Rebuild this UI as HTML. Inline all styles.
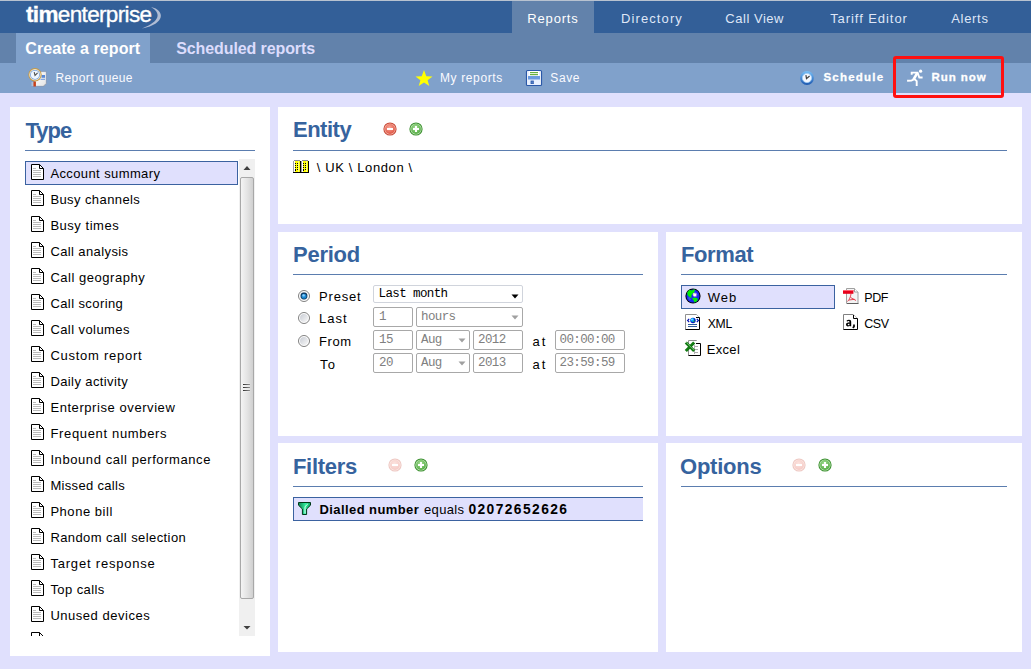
<!DOCTYPE html>
<html><head><meta charset="utf-8"><style>
html,body{margin:0;padding:0;}
body{width:1031px;height:669px;position:relative;overflow:hidden;background:#e0e0fd;font-family:'Liberation Sans', sans-serif;}
.t{position:absolute;white-space:pre;line-height:1;}
.r{position:absolute;}
</style></head><body>
<div class="r" style="left:0px;top:0px;width:1031px;height:1px;background:#b8c2d0"></div>
<div class="r" style="left:0px;top:1px;width:1031px;height:32px;background:#335f98"></div>
<div class="r" style="left:0px;top:33px;width:1031px;height:30px;background:#6282ab"></div>
<div class="r" style="left:0px;top:63px;width:1031px;height:30px;background:#80a1cb"></div>
<div class="r" style="left:512px;top:1px;width:82px;height:32px;background:#6282ab"></div>
<div class="r" style="left:16px;top:33px;width:134px;height:30px;background:#80a1cb"></div>
<div id="t1" class="t" style="left:527.3px;top:12.00px;font-size:13px;font-weight:400;color:#ffffff;letter-spacing:0.833px;font-family:'Liberation Sans', sans-serif;">Reports</div>
<div id="t2" class="t" style="left:621px;top:12.00px;font-size:13px;font-weight:400;color:#dfe6f7;letter-spacing:1.100px;font-family:'Liberation Sans', sans-serif;">Directory</div>
<div id="t3" class="t" style="left:725.3px;top:12.00px;font-size:13px;font-weight:400;color:#dfe6f7;letter-spacing:0.525px;font-family:'Liberation Sans', sans-serif;">Call View</div>
<div id="t4" class="t" style="left:830.2px;top:12.00px;font-size:13px;font-weight:400;color:#dfe6f7;letter-spacing:0.933px;font-family:'Liberation Sans', sans-serif;">Tariff Editor</div>
<div id="t5" class="t" style="left:951.2px;top:12.00px;font-size:13px;font-weight:400;color:#dfe6f7;letter-spacing:0.700px;font-family:'Liberation Sans', sans-serif;">Alerts</div>
<div id="t6" class="t" style="left:26px;top:4.15px;font-size:22.5px;font-weight:400;color:#ffffff;letter-spacing:-0.650px;font-family:'Liberation Sans', sans-serif;-webkit-text-stroke:0.35px #fff"><b>tim</b>enterprise</div>
<svg class="r" style="left:140px;top:5px;" width="26" height="26" viewBox="0 0 26 26"><path d="M11 2 C 25 5, 26 19, 2 23.5 C 21 16, 21 8, 11 2 Z" fill="#b0bcd4"/></svg>
<div id="t7" class="t" style="left:25.3px;top:41.46px;font-size:16px;font-weight:700;color:#ffffff;letter-spacing:0.071px;font-family:'Liberation Sans', sans-serif;">Create a report</div>
<div id="t8" class="t" style="left:176.2px;top:41.46px;font-size:16px;font-weight:700;color:#dcdcfc;letter-spacing:-0.100px;font-family:'Liberation Sans', sans-serif;">Scheduled reports</div>
<div id="t9" class="t" style="left:55.5px;top:71.84px;font-size:12px;font-weight:400;color:#fafaff;letter-spacing:0.391px;font-family:'Liberation Sans', sans-serif;">Report queue</div>
<div id="t10" class="t" style="left:440px;top:71.84px;font-size:12px;font-weight:400;color:#fafaff;letter-spacing:0.622px;font-family:'Liberation Sans', sans-serif;">My reports</div>
<div id="t11" class="t" style="left:550.3px;top:71.84px;font-size:12px;font-weight:400;color:#fafaff;letter-spacing:0.633px;font-family:'Liberation Sans', sans-serif;">Save</div>
<div id="t12" class="t" style="left:823.4px;top:72.37px;font-size:11.5px;font-weight:700;color:#fff;letter-spacing:1.225px;font-family:'Liberation Sans', sans-serif;-webkit-text-stroke:0.3px #fff">Schedule</div>
<div id="t13" class="t" style="left:931.5px;top:72.37px;font-size:11.5px;font-weight:700;color:#fff;letter-spacing:0.930px;font-family:'Liberation Sans', sans-serif;-webkit-text-stroke:0.3px #fff">Run now</div>
<div class="r" style="left:10px;top:107px;width:260px;height:549px;background:#fff"></div>
<div class="r" style="left:278px;top:107px;width:744px;height:117px;background:#fff"></div>
<div class="r" style="left:278px;top:232px;width:380px;height:204px;background:#fff"></div>
<div class="r" style="left:666px;top:232px;width:356px;height:204px;background:#fff"></div>
<div class="r" style="left:278px;top:443px;width:380px;height:209px;background:#fff"></div>
<div class="r" style="left:666px;top:443px;width:356px;height:209px;background:#fff"></div>
<div id="t14" class="t" style="left:25.4px;top:120.38px;font-size:22px;font-weight:700;color:#36639e;letter-spacing:-0.971px;font-family:'Liberation Sans', sans-serif;">Type</div>
<div class="r" style="left:25px;top:150px;width:230px;height:1px;background:#5b7daf"></div>
<div id="t15" class="t" style="left:293px;top:119.18px;font-size:22px;font-weight:700;color:#36639e;letter-spacing:-0.500px;font-family:'Liberation Sans', sans-serif;">Entity</div>
<div class="r" style="left:293px;top:150px;width:714px;height:1px;background:#5b7daf"></div>
<div id="t16" class="t" style="left:293px;top:243.88px;font-size:22px;font-weight:700;color:#36639e;letter-spacing:-0.250px;font-family:'Liberation Sans', sans-serif;">Period</div>
<div class="r" style="left:293px;top:274px;width:350px;height:1px;background:#5b7daf"></div>
<div id="t17" class="t" style="left:681px;top:243.88px;font-size:22px;font-weight:700;color:#36639e;letter-spacing:-0.380px;font-family:'Liberation Sans', sans-serif;">Format</div>
<div class="r" style="left:681px;top:274px;width:326px;height:1px;background:#5b7daf"></div>
<div id="t18" class="t" style="left:293px;top:456.18px;font-size:22px;font-weight:700;color:#36639e;letter-spacing:-0.316px;font-family:'Liberation Sans', sans-serif;">Filters</div>
<div class="r" style="left:293px;top:486px;width:350px;height:1px;background:#5b7daf"></div>
<div id="t19" class="t" style="left:680px;top:456.18px;font-size:22px;font-weight:700;color:#36639e;letter-spacing:-0.234px;font-family:'Liberation Sans', sans-serif;">Options</div>
<div class="r" style="left:681px;top:486px;width:326px;height:1px;background:#5b7daf"></div>
<div class="r" style="left:25px;top:161px;width:213px;height:24px;background:#e0e0fd;border:1px solid #3b62a0;box-sizing:border-box"></div>
<div class="r" style="left:25px;top:159px;width:214px;height:477px;overflow:hidden">
<svg class="r" style="left:6px;top:5px;" width="13" height="16" viewBox="0 0 13 16"><path d="M0.5 0.5 H8.5 L12.5 4.5 V15.5 H0.5 Z" fill="#fff" stroke="#000"/><path d="M8.5 0.5 V4.5 H12.5" fill="none" stroke="#000"/><path d="M2 4.5h3M2 6.5h8M2 8.5h8M2 10.5h8M2 12.5h8" stroke="#bbb"/></svg>
<div id="t20" class="t" style="left:25.4px;top:8.00px;font-size:13px;font-weight:400;color:#000;letter-spacing:0.395px;font-family:'Liberation Sans', sans-serif;">Account summary</div>
<svg class="r" style="left:6px;top:31px;" width="13" height="16" viewBox="0 0 13 16"><path d="M0.5 0.5 H8.5 L12.5 4.5 V15.5 H0.5 Z" fill="#fff" stroke="#000"/><path d="M8.5 0.5 V4.5 H12.5" fill="none" stroke="#000"/><path d="M2 4.5h3M2 6.5h8M2 8.5h8M2 10.5h8M2 12.5h8" stroke="#bbb"/></svg>
<div id="t21" class="t" style="left:25.4px;top:34.00px;font-size:13px;font-weight:400;color:#000;letter-spacing:0.410px;font-family:'Liberation Sans', sans-serif;">Busy channels</div>
<svg class="r" style="left:6px;top:57px;" width="13" height="16" viewBox="0 0 13 16"><path d="M0.5 0.5 H8.5 L12.5 4.5 V15.5 H0.5 Z" fill="#fff" stroke="#000"/><path d="M8.5 0.5 V4.5 H12.5" fill="none" stroke="#000"/><path d="M2 4.5h3M2 6.5h8M2 8.5h8M2 10.5h8M2 12.5h8" stroke="#bbb"/></svg>
<div id="t22" class="t" style="left:25.4px;top:60.00px;font-size:13px;font-weight:400;color:#000;letter-spacing:0.522px;font-family:'Liberation Sans', sans-serif;">Busy times</div>
<svg class="r" style="left:6px;top:83px;" width="13" height="16" viewBox="0 0 13 16"><path d="M0.5 0.5 H8.5 L12.5 4.5 V15.5 H0.5 Z" fill="#fff" stroke="#000"/><path d="M8.5 0.5 V4.5 H12.5" fill="none" stroke="#000"/><path d="M2 4.5h3M2 6.5h8M2 8.5h8M2 10.5h8M2 12.5h8" stroke="#bbb"/></svg>
<div id="t23" class="t" style="left:25.4px;top:86.00px;font-size:13px;font-weight:400;color:#000;letter-spacing:0.394px;font-family:'Liberation Sans', sans-serif;">Call analysis</div>
<svg class="r" style="left:6px;top:109px;" width="13" height="16" viewBox="0 0 13 16"><path d="M0.5 0.5 H8.5 L12.5 4.5 V15.5 H0.5 Z" fill="#fff" stroke="#000"/><path d="M8.5 0.5 V4.5 H12.5" fill="none" stroke="#000"/><path d="M2 4.5h3M2 6.5h8M2 8.5h8M2 10.5h8M2 12.5h8" stroke="#bbb"/></svg>
<div id="t24" class="t" style="left:25.4px;top:112.00px;font-size:13px;font-weight:400;color:#000;letter-spacing:0.524px;font-family:'Liberation Sans', sans-serif;">Call geography</div>
<svg class="r" style="left:6px;top:135px;" width="13" height="16" viewBox="0 0 13 16"><path d="M0.5 0.5 H8.5 L12.5 4.5 V15.5 H0.5 Z" fill="#fff" stroke="#000"/><path d="M8.5 0.5 V4.5 H12.5" fill="none" stroke="#000"/><path d="M2 4.5h3M2 6.5h8M2 8.5h8M2 10.5h8M2 12.5h8" stroke="#bbb"/></svg>
<div id="t25" class="t" style="left:25.4px;top:138.00px;font-size:13px;font-weight:400;color:#000;letter-spacing:0.411px;font-family:'Liberation Sans', sans-serif;">Call scoring</div>
<svg class="r" style="left:6px;top:161px;" width="13" height="16" viewBox="0 0 13 16"><path d="M0.5 0.5 H8.5 L12.5 4.5 V15.5 H0.5 Z" fill="#fff" stroke="#000"/><path d="M8.5 0.5 V4.5 H12.5" fill="none" stroke="#000"/><path d="M2 4.5h3M2 6.5h8M2 8.5h8M2 10.5h8M2 12.5h8" stroke="#bbb"/></svg>
<div id="t26" class="t" style="left:25.4px;top:164.00px;font-size:13px;font-weight:400;color:#000;letter-spacing:0.428px;font-family:'Liberation Sans', sans-serif;">Call volumes</div>
<svg class="r" style="left:6px;top:187px;" width="13" height="16" viewBox="0 0 13 16"><path d="M0.5 0.5 H8.5 L12.5 4.5 V15.5 H0.5 Z" fill="#fff" stroke="#000"/><path d="M8.5 0.5 V4.5 H12.5" fill="none" stroke="#000"/><path d="M2 4.5h3M2 6.5h8M2 8.5h8M2 10.5h8M2 12.5h8" stroke="#bbb"/></svg>
<div id="t27" class="t" style="left:25.4px;top:190.00px;font-size:13px;font-weight:400;color:#000;letter-spacing:0.747px;font-family:'Liberation Sans', sans-serif;">Custom report</div>
<svg class="r" style="left:6px;top:213px;" width="13" height="16" viewBox="0 0 13 16"><path d="M0.5 0.5 H8.5 L12.5 4.5 V15.5 H0.5 Z" fill="#fff" stroke="#000"/><path d="M8.5 0.5 V4.5 H12.5" fill="none" stroke="#000"/><path d="M2 4.5h3M2 6.5h8M2 8.5h8M2 10.5h8M2 12.5h8" stroke="#bbb"/></svg>
<div id="t28" class="t" style="left:25.4px;top:216.00px;font-size:13px;font-weight:400;color:#000;letter-spacing:0.399px;font-family:'Liberation Sans', sans-serif;">Daily activity</div>
<svg class="r" style="left:6px;top:239px;" width="13" height="16" viewBox="0 0 13 16"><path d="M0.5 0.5 H8.5 L12.5 4.5 V15.5 H0.5 Z" fill="#fff" stroke="#000"/><path d="M8.5 0.5 V4.5 H12.5" fill="none" stroke="#000"/><path d="M2 4.5h3M2 6.5h8M2 8.5h8M2 10.5h8M2 12.5h8" stroke="#bbb"/></svg>
<div id="t29" class="t" style="left:25.4px;top:242.00px;font-size:13px;font-weight:400;color:#000;letter-spacing:0.570px;font-family:'Liberation Sans', sans-serif;">Enterprise overview</div>
<svg class="r" style="left:6px;top:265px;" width="13" height="16" viewBox="0 0 13 16"><path d="M0.5 0.5 H8.5 L12.5 4.5 V15.5 H0.5 Z" fill="#fff" stroke="#000"/><path d="M8.5 0.5 V4.5 H12.5" fill="none" stroke="#000"/><path d="M2 4.5h3M2 6.5h8M2 8.5h8M2 10.5h8M2 12.5h8" stroke="#bbb"/></svg>
<div id="t30" class="t" style="left:25.4px;top:268.00px;font-size:13px;font-weight:400;color:#000;letter-spacing:0.667px;font-family:'Liberation Sans', sans-serif;">Frequent numbers</div>
<svg class="r" style="left:6px;top:291px;" width="13" height="16" viewBox="0 0 13 16"><path d="M0.5 0.5 H8.5 L12.5 4.5 V15.5 H0.5 Z" fill="#fff" stroke="#000"/><path d="M8.5 0.5 V4.5 H12.5" fill="none" stroke="#000"/><path d="M2 4.5h3M2 6.5h8M2 8.5h8M2 10.5h8M2 12.5h8" stroke="#bbb"/></svg>
<div id="t31" class="t" style="left:25.4px;top:294.00px;font-size:13px;font-weight:400;color:#000;letter-spacing:0.580px;font-family:'Liberation Sans', sans-serif;">Inbound call performance</div>
<svg class="r" style="left:6px;top:317px;" width="13" height="16" viewBox="0 0 13 16"><path d="M0.5 0.5 H8.5 L12.5 4.5 V15.5 H0.5 Z" fill="#fff" stroke="#000"/><path d="M8.5 0.5 V4.5 H12.5" fill="none" stroke="#000"/><path d="M2 4.5h3M2 6.5h8M2 8.5h8M2 10.5h8M2 12.5h8" stroke="#bbb"/></svg>
<div id="t32" class="t" style="left:25.4px;top:320.00px;font-size:13px;font-weight:400;color:#000;letter-spacing:0.320px;font-family:'Liberation Sans', sans-serif;">Missed calls</div>
<svg class="r" style="left:6px;top:343px;" width="13" height="16" viewBox="0 0 13 16"><path d="M0.5 0.5 H8.5 L12.5 4.5 V15.5 H0.5 Z" fill="#fff" stroke="#000"/><path d="M8.5 0.5 V4.5 H12.5" fill="none" stroke="#000"/><path d="M2 4.5h3M2 6.5h8M2 8.5h8M2 10.5h8M2 12.5h8" stroke="#bbb"/></svg>
<div id="t33" class="t" style="left:25.4px;top:346.00px;font-size:13px;font-weight:400;color:#000;letter-spacing:0.535px;font-family:'Liberation Sans', sans-serif;">Phone bill</div>
<svg class="r" style="left:6px;top:369px;" width="13" height="16" viewBox="0 0 13 16"><path d="M0.5 0.5 H8.5 L12.5 4.5 V15.5 H0.5 Z" fill="#fff" stroke="#000"/><path d="M8.5 0.5 V4.5 H12.5" fill="none" stroke="#000"/><path d="M2 4.5h3M2 6.5h8M2 8.5h8M2 10.5h8M2 12.5h8" stroke="#bbb"/></svg>
<div id="t34" class="t" style="left:25.4px;top:372.00px;font-size:13px;font-weight:400;color:#000;letter-spacing:0.410px;font-family:'Liberation Sans', sans-serif;">Random call selection</div>
<svg class="r" style="left:6px;top:395px;" width="13" height="16" viewBox="0 0 13 16"><path d="M0.5 0.5 H8.5 L12.5 4.5 V15.5 H0.5 Z" fill="#fff" stroke="#000"/><path d="M8.5 0.5 V4.5 H12.5" fill="none" stroke="#000"/><path d="M2 4.5h3M2 6.5h8M2 8.5h8M2 10.5h8M2 12.5h8" stroke="#bbb"/></svg>
<div id="t35" class="t" style="left:25.4px;top:398.00px;font-size:13px;font-weight:400;color:#000;letter-spacing:0.803px;font-family:'Liberation Sans', sans-serif;">Target response</div>
<svg class="r" style="left:6px;top:421px;" width="13" height="16" viewBox="0 0 13 16"><path d="M0.5 0.5 H8.5 L12.5 4.5 V15.5 H0.5 Z" fill="#fff" stroke="#000"/><path d="M8.5 0.5 V4.5 H12.5" fill="none" stroke="#000"/><path d="M2 4.5h3M2 6.5h8M2 8.5h8M2 10.5h8M2 12.5h8" stroke="#bbb"/></svg>
<div id="t36" class="t" style="left:25.4px;top:424.00px;font-size:13px;font-weight:400;color:#000;letter-spacing:0.420px;font-family:'Liberation Sans', sans-serif;">Top calls</div>
<svg class="r" style="left:6px;top:447px;" width="13" height="16" viewBox="0 0 13 16"><path d="M0.5 0.5 H8.5 L12.5 4.5 V15.5 H0.5 Z" fill="#fff" stroke="#000"/><path d="M8.5 0.5 V4.5 H12.5" fill="none" stroke="#000"/><path d="M2 4.5h3M2 6.5h8M2 8.5h8M2 10.5h8M2 12.5h8" stroke="#bbb"/></svg>
<div id="t37" class="t" style="left:25.4px;top:450.00px;font-size:13px;font-weight:400;color:#000;letter-spacing:0.524px;font-family:'Liberation Sans', sans-serif;">Unused devices</div>
<svg class="r" style="left:6px;top:473px;" width="13" height="16" viewBox="0 0 13 16"><path d="M0.5 0.5 H8.5 L12.5 4.5 V15.5 H0.5 Z" fill="#fff" stroke="#000"/><path d="M8.5 0.5 V4.5 H12.5" fill="none" stroke="#000"/><path d="M2 4.5h3M2 6.5h8M2 8.5h8M2 10.5h8M2 12.5h8" stroke="#bbb"/></svg>
</div>
<div class="r" style="left:239px;top:159px;width:16px;height:477px;background:#f0f0f0"></div>
<div class="r" style="left:240px;top:177px;width:14px;height:422px;background:linear-gradient(90deg,#f4f4f4,#e4e4e4 50%,#d0d0d0);border:1px solid #a8a8a8;box-sizing:border-box;border-radius:2px"></div>
<svg class="r" style="left:243px;top:383px;" width="8" height="9" viewBox="0 0 8 9"><path d="M0 1.5h7M0 4.5h7M0 7.5h7" stroke="#fff" stroke-width="2" opacity="0.6"/><defs><linearGradient id="gr" x1="0" x2="1"><stop offset="0" stop-color="#303030"/><stop offset="1" stop-color="#909090"/></linearGradient></defs><path d="M0 1.5h7M0 4.5h7M0 7.5h7" stroke="url(#gr)" stroke-width="1"/></svg>
<svg class="r" style="left:239px;top:158px;" width="16" height="18" viewBox="0 0 16 18"><path d="M4.5 12 L8 8 L11.5 12 Z" fill="#404040"/></svg>
<svg class="r" style="left:239px;top:618px;" width="16" height="18" viewBox="0 0 16 18"><path d="M4.5 8 L8 11.5 L11.5 8 Z" fill="#404040"/></svg>
<svg class="r" style="left:26px;top:65px;" width="24" height="24" viewBox="0 0 24 24"><defs><linearGradient id="dg" x1="0" y1="0" x2="1" y2="1"><stop offset="0" stop-color="#fff"/><stop offset="1" stop-color="#e4e4e4"/></linearGradient></defs>
<path d="M9 6.6 H20.3 V18.5 L17.8 21.3 H9 Z" fill="url(#dg)" stroke="#6a7a98" stroke-width="0.5"/>
<path d="M20 18.5 L17.5 21" stroke="#b0b0b0" stroke-width="0.8"/>
<rect x="15.5" y="10" width="3.5" height="2.8" fill="#5a8ad8"/><rect x="14.5" y="13.8" width="4.5" height="0.9" fill="#5a8ad8"/>
<rect x="7.3" y="16.5" width="2.6" height="5" fill="#c8401a"/>
<path d="M5.5 18h2M5.5 20h2" stroke="#f0f0f0" stroke-width="0.8"/>
<circle cx="9" cy="9.8" r="6.7" fill="#c49a48"/><circle cx="9" cy="9.8" r="5.7" fill="#f4ead0"/><circle cx="9" cy="9.8" r="4.9" fill="#78a4e4"/><circle cx="9" cy="9.8" r="4.1" fill="#f0f7ff"/>
<path d="M8.2 7.2 L9 10.5 L11.6 7.8" fill="none" stroke="#505050" stroke-width="1.1"/></svg>
<svg class="r" style="left:412px;top:66px;" width="24" height="24" viewBox="0 0 24 24"><polygon points="12,4 14.3,10.2 20.5,10.4 15.6,14.3 17.3,20 12,16.6 6.7,20 8.4,14.3 3.5,10.4 9.7,10.2" fill="#ffff00"/></svg>
<svg class="r" style="left:522px;top:66px;" width="24" height="24" viewBox="0 0 24 24"><rect x="4.5" y="4.5" width="15" height="15" rx="1" fill="#fff" stroke="#2a58a8" stroke-width="1.2"/>
<rect x="6" y="5" width="12" height="14" fill="#e8f0ff"/>
<rect x="7" y="5" width="10" height="4.8" fill="#fff"/><rect x="8" y="6" width="8" height="1.2" fill="#68b040"/><rect x="8" y="8" width="8" height="1.2" fill="#68b040"/>
<rect x="6" y="10" width="12" height="3.5" fill="#6a9ae0"/>
<rect x="8.6" y="14.6" width="3.2" height="3.4" fill="#2a58a8"/><path d="M10.2 14.6v3.4M8.6 16.3h3.2" stroke="#7aa0e0" stroke-width="0.4"/></svg>
<svg class="r" style="left:796px;top:66px;" width="24" height="24" viewBox="0 0 24 24"><defs><linearGradient id="cg" x1="0" y1="0" x2="0" y2="1"><stop offset="0" stop-color="#78c0f8"/><stop offset="1" stop-color="#1c58b0"/></linearGradient></defs>
<circle cx="11" cy="12" r="6.9" fill="url(#cg)"/><circle cx="11" cy="12" r="4.6" fill="#f4f8ff"/><circle cx="11" cy="12" r="4.6" fill="none" stroke="#a8d0f8" stroke-width="0.8"/>
<path d="M9.9 9.2 L10.5 12.6 L13.6 10" fill="none" stroke="#404040" stroke-width="1.2"/></svg>
<svg class="r" style="left:903px;top:66px;" width="24" height="24" viewBox="0 0 24 24"><circle cx="17.6" cy="5.2" r="1.6" fill="#fff"/>
<path d="M8.7 8.7 V6.6 H14.6 L16.3 11.5 H19.6" fill="none" stroke="#fff" stroke-width="1.9" stroke-linejoin="miter"/>
<path d="M14.3 7 L10.3 13.8" fill="none" stroke="#fff" stroke-width="2.6"/><path d="M10.6 13.6 L8.3 14.6 L4.1 14.8" fill="none" stroke="#fff" stroke-width="1.9"/>
<path d="M11.3 12.8 L13.7 15.2 V20" fill="none" stroke="#fff" stroke-width="1.9"/></svg>
<div class="r" style="left:893px;top:56px;width:111px;height:42px;border:3px solid #ff1010;box-sizing:border-box;border-radius:3px"></div>
<svg class="r" style="left:383px;top:122px;" width="14" height="14" viewBox="0 0 14 14"><g><defs><radialGradient id="rg383122" cx="0.45" cy="0.35" r="0.7"><stop offset="0" stop-color="#f8a898"/><stop offset="1" stop-color="#e05040"/></radialGradient></defs>
<circle cx="7" cy="7" r="6.6" fill="#c84838"/><circle cx="7" cy="7" r="5.6" fill="#f4c0b0"/><circle cx="7" cy="7" r="4.9" fill="url(#rg383122)"/>
<rect x="4" y="6" width="6" height="2" fill="#fff"/></g></svg>
<svg class="r" style="left:409px;top:122px;" width="14" height="14" viewBox="0 0 14 14"><defs><radialGradient id="gg409122" cx="0.45" cy="0.35" r="0.7"><stop offset="0" stop-color="#a8e098"/><stop offset="1" stop-color="#50a840"/></radialGradient></defs>
<circle cx="7" cy="7" r="6.6" fill="#3c9030"/><circle cx="7" cy="7" r="5.6" fill="#c8ecc0"/><circle cx="7" cy="7" r="4.9" fill="url(#gg409122)"/>
<rect x="4" y="6" width="6" height="2" fill="#fff"/><rect x="6" y="4" width="2" height="6" fill="#fff"/></svg>
<svg class="r" style="left:388px;top:458px;" width="14" height="14" viewBox="0 0 14 14"><g opacity="0.3"><defs><radialGradient id="rg388458" cx="0.45" cy="0.35" r="0.7"><stop offset="0" stop-color="#f8a898"/><stop offset="1" stop-color="#e05040"/></radialGradient></defs>
<circle cx="7" cy="7" r="6.6" fill="#c84838"/><circle cx="7" cy="7" r="5.6" fill="#f4c0b0"/><circle cx="7" cy="7" r="4.9" fill="url(#rg388458)"/>
<rect x="4" y="6" width="6" height="2" fill="#fff"/></g></svg>
<svg class="r" style="left:414px;top:458px;" width="14" height="14" viewBox="0 0 14 14"><defs><radialGradient id="gg414458" cx="0.45" cy="0.35" r="0.7"><stop offset="0" stop-color="#a8e098"/><stop offset="1" stop-color="#50a840"/></radialGradient></defs>
<circle cx="7" cy="7" r="6.6" fill="#3c9030"/><circle cx="7" cy="7" r="5.6" fill="#c8ecc0"/><circle cx="7" cy="7" r="4.9" fill="url(#gg414458)"/>
<rect x="4" y="6" width="6" height="2" fill="#fff"/><rect x="6" y="4" width="2" height="6" fill="#fff"/></svg>
<svg class="r" style="left:792px;top:458px;" width="14" height="14" viewBox="0 0 14 14"><g opacity="0.3"><defs><radialGradient id="rg792458" cx="0.45" cy="0.35" r="0.7"><stop offset="0" stop-color="#f8a898"/><stop offset="1" stop-color="#e05040"/></radialGradient></defs>
<circle cx="7" cy="7" r="6.6" fill="#c84838"/><circle cx="7" cy="7" r="5.6" fill="#f4c0b0"/><circle cx="7" cy="7" r="4.9" fill="url(#rg792458)"/>
<rect x="4" y="6" width="6" height="2" fill="#fff"/></g></svg>
<svg class="r" style="left:818px;top:458px;" width="14" height="14" viewBox="0 0 14 14"><defs><radialGradient id="gg818458" cx="0.45" cy="0.35" r="0.7"><stop offset="0" stop-color="#a8e098"/><stop offset="1" stop-color="#50a840"/></radialGradient></defs>
<circle cx="7" cy="7" r="6.6" fill="#3c9030"/><circle cx="7" cy="7" r="5.6" fill="#c8ecc0"/><circle cx="7" cy="7" r="4.9" fill="url(#gg818458)"/>
<rect x="4" y="6" width="6" height="2" fill="#fff"/><rect x="6" y="4" width="2" height="6" fill="#fff"/></svg>
<svg class="r" style="left:293px;top:160px;shape-rendering:crispEdges" width="16" height="13" viewBox="0 0 16 13"><rect x="1" y="0" width="6" height="1" fill="#909090"/><rect x="0" y="1" width="1" height="11" fill="#a0a0a0"/><rect x="1" y="1" width="6" height="11" fill="#ffff00"/><rect x="1" y="1" width="1" height="11" fill="#ffffff"/><rect x="5" y="1" width="1" height="11" fill="#ffff80"/><rect x="2" y="3" width="1" height="1" fill="#000"/><rect x="4" y="3" width="1" height="1" fill="#000"/><rect x="2" y="5" width="1" height="1" fill="#000"/><rect x="4" y="5" width="1" height="1" fill="#000"/><rect x="2" y="7" width="1" height="1" fill="#000"/><rect x="4" y="7" width="1" height="1" fill="#000"/><rect x="2" y="9" width="1" height="1" fill="#000"/><rect x="4" y="9" width="1" height="1" fill="#000"/><rect x="2" y="10" width="1" height="1" fill="#000"/><rect x="7" y="1" width="1" height="12" fill="#000"/><rect x="0" y="12" width="8" height="1" fill="#000"/><rect x="9" y="0" width="6" height="1" fill="#909090"/><rect x="8" y="1" width="1" height="11" fill="#a0a0a0"/><rect x="9" y="1" width="6" height="11" fill="#ffff00"/><rect x="9" y="1" width="1" height="11" fill="#ffffff"/><rect x="13" y="1" width="1" height="11" fill="#ffff80"/><rect x="10" y="3" width="1" height="1" fill="#000"/><rect x="12" y="3" width="1" height="1" fill="#000"/><rect x="10" y="5" width="1" height="1" fill="#000"/><rect x="12" y="5" width="1" height="1" fill="#000"/><rect x="10" y="7" width="1" height="1" fill="#000"/><rect x="12" y="7" width="1" height="1" fill="#000"/><rect x="10" y="9" width="1" height="1" fill="#000"/><rect x="12" y="9" width="1" height="1" fill="#000"/><rect x="10" y="10" width="1" height="1" fill="#000"/><rect x="15" y="1" width="1" height="12" fill="#000"/><rect x="8" y="12" width="8" height="1" fill="#000"/></svg>
<div id="t38" class="t" style="left:316.8px;top:161.00px;font-size:13px;font-weight:400;color:#000;letter-spacing:0.617px;font-family:'Liberation Sans', sans-serif;">\ UK \ London \</div>
<svg class="r" style="left:298px;top:290px;" width="12" height="12" viewBox="0 0 12 12"><defs><linearGradient id="rd296" x1="0" y1="0" x2="1" y2="1"><stop offset="0" stop-color="#c8ccd4"/><stop offset="1" stop-color="#f8f8f8"/></linearGradient></defs><circle cx="6" cy="6" r="5.5" fill="#fff" stroke="#808080" stroke-width="1"/><circle cx="6" cy="6" r="4" fill="url(#rd296)"/><circle cx="6" cy="6" r="3.4" fill="#0c365e"/><circle cx="6" cy="6.2" r="2.5" fill="#1c88d0"/><circle cx="5.6" cy="5.4" r="1.2" fill="#8cd0ff"/></svg>
<svg class="r" style="left:298px;top:312px;" width="12" height="12" viewBox="0 0 12 12"><defs><linearGradient id="rd318" x1="0" y1="0" x2="1" y2="1"><stop offset="0" stop-color="#c8ccd4"/><stop offset="1" stop-color="#f8f8f8"/></linearGradient></defs><circle cx="6" cy="6" r="5.5" fill="#fff" stroke="#808080" stroke-width="1"/><circle cx="6" cy="6" r="4" fill="url(#rd318)"/></svg>
<svg class="r" style="left:298px;top:335px;" width="12" height="12" viewBox="0 0 12 12"><defs><linearGradient id="rd341" x1="0" y1="0" x2="1" y2="1"><stop offset="0" stop-color="#c8ccd4"/><stop offset="1" stop-color="#f8f8f8"/></linearGradient></defs><circle cx="6" cy="6" r="5.5" fill="#fff" stroke="#808080" stroke-width="1"/><circle cx="6" cy="6" r="4" fill="url(#rd341)"/></svg>
<div id="t39" class="t" style="left:319.1px;top:290.00px;font-size:13px;font-weight:400;color:#000;letter-spacing:0.770px;font-family:'Liberation Sans', sans-serif;">Preset</div>
<div id="t40" class="t" style="left:319.1px;top:312.00px;font-size:13px;font-weight:400;color:#000;letter-spacing:0.993px;font-family:'Liberation Sans', sans-serif;">Last</div>
<div id="t41" class="t" style="left:319.1px;top:335.00px;font-size:13px;font-weight:400;color:#000;letter-spacing:0.590px;font-family:'Liberation Sans', sans-serif;">From</div>
<div id="t42" class="t" style="left:320.1px;top:358.00px;font-size:13px;font-weight:400;color:#000;letter-spacing:1.050px;font-family:'Liberation Sans', sans-serif;">To</div>
<div class="r" style="left:373px;top:285px;width:150px;height:18px;background:#fff;border:1px solid #d0d4dc;box-sizing:border-box;border-radius:2px"></div>
<div id="t43" class="t" style="left:378.5px;top:288.42px;font-size:12.5px;font-weight:400;color:#000;letter-spacing:-0.600px;font-family:'Liberation Mono', monospace;">Last month</div>
<svg class="r" style="left:511px;top:294px;" width="8" height="5" viewBox="0 0 8 5"><path d="M0.5 0.5 H7.5 L4 4.5 Z" fill="#000"/></svg>
<div class="r" style="left:373px;top:307px;width:40px;height:20px;background:#fff;border:1px solid #a8a8a8;box-sizing:border-box;border-radius:2px"></div>
<div id="t44" class="t" style="left:379px;top:310.92px;font-size:12.5px;font-weight:400;color:#808080;letter-spacing:-0.600px;font-family:'Liberation Mono', monospace;">1</div>
<div class="r" style="left:416px;top:307px;width:107px;height:20px;background:#fff;border:1px solid #a8a8a8;box-sizing:border-box;border-radius:2px"></div>
<div id="t45" class="t" style="left:421px;top:310.92px;font-size:12.5px;font-weight:400;color:#808080;letter-spacing:-0.600px;font-family:'Liberation Mono', monospace;">hours</div>
<svg class="r" style="left:511px;top:315px;" width="8" height="5" viewBox="0 0 8 5"><path d="M0.5 0.5 H7.5 L4 4.5 Z" fill="#a0a0a0"/></svg>
<div class="r" style="left:373px;top:330px;width:40px;height:20px;background:#fff;border:1px solid #a8a8a8;box-sizing:border-box;border-radius:2px"></div>
<div id="t46" class="t" style="left:379px;top:333.92px;font-size:12.5px;font-weight:400;color:#808080;letter-spacing:-0.600px;font-family:'Liberation Mono', monospace;">15</div>
<div class="r" style="left:416px;top:330px;width:54px;height:20px;background:#fff;border:1px solid #a8a8a8;box-sizing:border-box;border-radius:2px"></div>
<div id="t47" class="t" style="left:421px;top:333.92px;font-size:12.5px;font-weight:400;color:#808080;letter-spacing:-0.600px;font-family:'Liberation Mono', monospace;">Aug</div>
<svg class="r" style="left:458px;top:338px;" width="8" height="5" viewBox="0 0 8 5"><path d="M0.5 0.5 H7.5 L4 4.5 Z" fill="#a0a0a0"/></svg>
<div class="r" style="left:473px;top:330px;width:50px;height:20px;background:#fff;border:1px solid #a8a8a8;box-sizing:border-box;border-radius:2px"></div>
<div id="t48" class="t" style="left:478px;top:333.92px;font-size:12.5px;font-weight:400;color:#808080;letter-spacing:-0.600px;font-family:'Liberation Mono', monospace;">2012</div>
<div id="t49" class="t" style="left:532.6px;top:335.00px;font-size:13px;font-weight:400;color:#000;letter-spacing:2.050px;font-family:'Liberation Sans', sans-serif;">at</div>
<div class="r" style="left:555px;top:330px;width:70px;height:20px;background:#fff;border:1px solid #a8a8a8;box-sizing:border-box;border-radius:2px"></div>
<div id="t50" class="t" style="left:559.5px;top:333.92px;font-size:12.5px;font-weight:400;color:#808080;letter-spacing:-0.600px;font-family:'Liberation Mono', monospace;">00:00:00</div>
<div class="r" style="left:373px;top:353px;width:40px;height:20px;background:#fff;border:1px solid #a8a8a8;box-sizing:border-box;border-radius:2px"></div>
<div id="t51" class="t" style="left:379px;top:356.92px;font-size:12.5px;font-weight:400;color:#808080;letter-spacing:-0.600px;font-family:'Liberation Mono', monospace;">20</div>
<div class="r" style="left:416px;top:353px;width:54px;height:20px;background:#fff;border:1px solid #a8a8a8;box-sizing:border-box;border-radius:2px"></div>
<div id="t52" class="t" style="left:421px;top:356.92px;font-size:12.5px;font-weight:400;color:#808080;letter-spacing:-0.600px;font-family:'Liberation Mono', monospace;">Aug</div>
<svg class="r" style="left:458px;top:361px;" width="8" height="5" viewBox="0 0 8 5"><path d="M0.5 0.5 H7.5 L4 4.5 Z" fill="#a0a0a0"/></svg>
<div class="r" style="left:473px;top:353px;width:50px;height:20px;background:#fff;border:1px solid #a8a8a8;box-sizing:border-box;border-radius:2px"></div>
<div id="t53" class="t" style="left:478px;top:356.92px;font-size:12.5px;font-weight:400;color:#808080;letter-spacing:-0.600px;font-family:'Liberation Mono', monospace;">2013</div>
<div id="t54" class="t" style="left:532.6px;top:358.00px;font-size:13px;font-weight:400;color:#000;letter-spacing:2.050px;font-family:'Liberation Sans', sans-serif;">at</div>
<div class="r" style="left:555px;top:353px;width:70px;height:20px;background:#fff;border:1px solid #a8a8a8;box-sizing:border-box;border-radius:2px"></div>
<div id="t55" class="t" style="left:559.5px;top:356.92px;font-size:12.5px;font-weight:400;color:#808080;letter-spacing:-0.600px;font-family:'Liberation Mono', monospace;">23:59:59</div>
<div class="r" style="left:681px;top:285px;width:154px;height:24px;background:#e0e0fd;border:1px solid #3b62a0;box-sizing:border-box"></div>
<svg class="r" style="left:685px;top:288px;" width="16" height="16" viewBox="0 0 16 16"><circle cx="8" cy="8" r="7.6" fill="#000"/><circle cx="8" cy="8" r="6.6" fill="#1828f0"/>
<path d="M2.2 4.5 L4.5 1.8 L7 2.6 L8.5 1.5 L10.2 1.6 L9.2 4.5 L7.5 5.5 L6.2 8 L6.8 10 L4.6 9.2 L2.6 7.2 Z" fill="#00f000"/>
<path d="M7 10.2 L10 9.6 L12.8 10.6 L12.2 13 L9.6 14.4 L8.6 12.6 Z" fill="#00f000"/>
<path d="M4 8.5 L6 11.5 L4.5 12.5 L3 10 Z" fill="#4060d8"/>
<circle cx="10" cy="6.8" r="2.4" fill="#c090f0" opacity="0.7"/><circle cx="9.7" cy="6.8" r="1.5" fill="#fff"/><circle cx="8.6" cy="6" r="0.8" fill="#e8ffa0"/></svg>
<div id="t56" class="t" style="left:707.8px;top:291.00px;font-size:13px;font-weight:400;color:#000;letter-spacing:0.950px;font-family:'Liberation Sans', sans-serif;">Web</div>
<svg class="r" style="left:685px;top:314px;" width="16" height="16" viewBox="0 0 16 16"><path d="M0.5 15.5 V0.5 H11.5 L14.5 3.5" fill="#fff" stroke="#909090"/><rect x="1" y="1" width="13" height="14" fill="#fff"/>
<path d="M11.5 0.5 L14.5 3.5" stroke="#c0c0c0"/><path d="M11 3.5 H14.5 V15.5 H0.5" fill="none" stroke="#000"/>
<path d="M4.2 4.8 L2.6 6.5 L4.2 8.2 M11.8 4.8 L13.4 6.5 L11.8 8.2" fill="none" stroke="#0010b0" stroke-width="1.2"/>
<circle cx="8" cy="6.5" r="2.7" fill="#0020c0"/><circle cx="7.4" cy="5.9" r="1.8" fill="#10b0ff"/><circle cx="8.8" cy="7.3" r="0.8" fill="#20c040"/><circle cx="7" cy="5.4" r="0.6" fill="#c0ffff"/>
<path d="M3 10.5h9M3 12.5h9" stroke="#2f5a9a"/></svg>
<div id="t57" class="t" style="left:707.8px;top:318.07px;font-size:12.2px;font-weight:400;color:#000;letter-spacing:-0.350px;font-family:'Liberation Sans', sans-serif;">XML</div>
<svg class="r" style="left:684px;top:339px;" width="18" height="18" viewBox="0 0 18 18"><path d="M4.5 16.5 V1.5 H12.5 L15.5 4.5" fill="#fff" stroke="#909090"/><rect x="5" y="2" width="10" height="14" fill="#fff"/>
<path d="M12 4.5 H16.5 V16.5 H4.5" fill="none" stroke="#000"/>
<path d="M11 7.5h3M11 10.5h3M11 13.5h3M10.5 6v9" stroke="#b0b0b0"/>
<path d="M1.8 3.5 L10.2 12 M10.2 3.5 L1.8 12" stroke="#127a12" stroke-width="3"/>
<path d="M2.3 3.3 L10 11.2" stroke="#a8e0a8" stroke-width="0.6"/></svg>
<div id="t58" class="t" style="left:706.8px;top:343.00px;font-size:13px;font-weight:400;color:#000;letter-spacing:0.300px;font-family:'Liberation Sans', sans-serif;">Excel</div>
<svg class="r" style="left:842px;top:288px;" width="17" height="16" viewBox="0 0 17 16"><path d="M4.5 15.5 V0.5 H12.5 L16 4 V15.5 Z" fill="#f4f4f4" stroke="#a0a0a0"/>
<path d="M12.5 0.5 V4 H16" fill="#fff" stroke="#a0a0a0"/><path d="M5 15.5 H16.5" stroke="#606060"/>
<rect x="1" y="2" width="10.4" height="3.8" fill="#e8001a"/><rect x="1" y="2" width="10.4" height="1" fill="#ff6070"/>
<path d="M9 5.8 C 8.6 9, 7.5 11.5, 5.5 13.5 M8.6 9.5 L14 12.5 M7 12 L12.5 11.3" fill="none" stroke="#e02030" stroke-width="0.8"/></svg>
<div id="t59" class="t" style="left:864.3px;top:292.02px;font-size:12.5px;font-weight:400;color:#000;letter-spacing:-0.450px;font-family:'Liberation Sans', sans-serif;">PDF</div>
<svg class="r" style="left:843px;top:314px;" width="16" height="16" viewBox="0 0 16 16"><path d="M0.5 15.5 V0.5 H10.5 L14.5 4.5 V15.5 Z" fill="#fff"/>
<path d="M0.5 15.5 V0.5 H10.5" fill="none" stroke="#808080"/><path d="M10.5 0.5 L14.5 4.5" stroke="#c0c0c0"/>
<path d="M10.5 1 V4.5 H14.5 V15.5 H0.5" fill="none" stroke="#000"/>
<path d="M3.6 6.6 C4.2 5.9 5 5.7 6 5.7 C7.6 5.7 8.2 6.5 8.2 8 V12.3 H6.6 V11.6 C6.2 12.2 5.6 12.5 4.9 12.5 C3.7 12.5 3 11.7 3 10.6 C3 9.2 4.2 8.6 6.5 8.6 V8.2 C6.5 7.4 6.1 7.1 5.5 7.1 C4.9 7.1 4.4 7.4 4 7.8 Z M6.5 9.7 C5.1 9.7 4.7 10.1 4.7 10.6 C4.7 11 5 11.3 5.4 11.3 C6 11.3 6.5 10.9 6.5 10.2 Z" fill="#000"/>
<path d="M11 10.6 V12.6 L9.8 13.8" stroke="#000" stroke-width="1.7" fill="none"/></svg>
<div id="t60" class="t" style="left:864.3px;top:318.02px;font-size:12.5px;font-weight:400;color:#000;letter-spacing:-0.450px;font-family:'Liberation Sans', sans-serif;">CSV</div>
<div class="r" style="left:293px;top:497px;width:350px;height:24px;background:#e0e0fd;border:1px solid #3b62a0;border-right:none;box-sizing:border-box"></div>
<svg class="r" style="left:298px;top:502px;" width="13" height="13" viewBox="0 0 13 13"><defs><linearGradient id="fg" x1="0" y1="0" x2="1" y2="0"><stop offset="0" stop-color="#108050"/><stop offset="0.6" stop-color="#30f0a0"/><stop offset="1" stop-color="#10a060"/></linearGradient></defs>
<path d="M0.5 0.5 H12.5 V3.2 L8.6 7 V12.5 H4.4 V7 L0.5 3.2 Z" fill="url(#fg)" stroke="#003818" stroke-width="1"/>
<path d="M9.8 2 L7 4.6 V11.5" fill="none" stroke="#f0fff8" stroke-width="0.9"/></svg>
<div id="t61" class="t" style="left:319.5px;top:502.50px;font-size:13px;font-weight:700;color:#000;letter-spacing:0.413px;font-family:'Liberation Sans', sans-serif;">Dialled number</div>
<div id="t62" class="t" style="left:424px;top:502.50px;font-size:13px;font-weight:400;color:#000;letter-spacing:0.340px;font-family:'Liberation Sans', sans-serif;">equals</div>
<div id="t63" class="t" style="left:468.4px;top:502.62px;font-size:13.8px;font-weight:700;color:#000;letter-spacing:1.420px;font-family:'Liberation Sans', sans-serif;">02072652626</div>
</body></html>
